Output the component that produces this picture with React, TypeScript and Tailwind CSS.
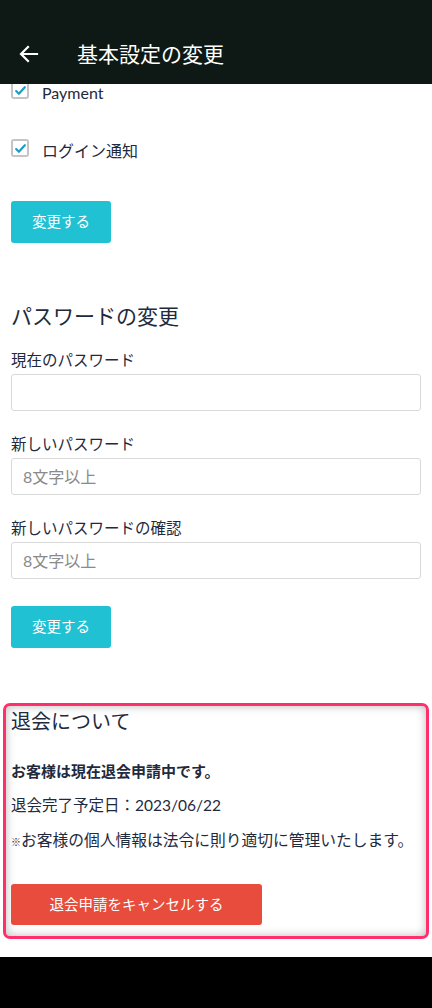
import React from "react";

const font = { fontFamily: 'Lato, "Noto Sans CJK JP", sans-serif' };

const CheckBox = () => (
  <span className="flex h-[18px] w-[18px] flex-shrink-0 items-center justify-center rounded-[3px] border-2 border-[#c4c4c4] bg-white">
    <svg viewBox="0 0 24 24" className="h-[13px] w-[13px]" fill="none">
      <path d="M4 13l5 5L20 6" stroke="#1d9cc0" strokeWidth={4} strokeLinecap="round" strokeLinejoin="round" />
    </svg>
  </span>
);

const Field = ({ label, placeholder }: { label: string; placeholder?: string }) => (
  <div className="mt-[22px] first:mt-[17px]">
    <label className="block text-[15.5px] leading-[22px] text-[#1f2a3d]">{label}</label>
    <input
      type="password"
      placeholder={placeholder}
      className="mt-[3px] block h-[37px] w-full rounded-[3px] border border-[#d9d9d9] bg-white px-[11px] text-[16px] text-[#1f2a3d] placeholder:text-[#8a8a8a] outline-none"
    />
  </div>
);

const BlueButton = ({ className = "" }: { className?: string }) => (
  <button className={`h-[42px] w-[100px] rounded-[3px] bg-[#21c1d4] text-[14.5px] text-white ${className}`}>
    変更する
  </button>
);

export default function App() {
  return (
    <div className="relative h-[1008px] w-[432px] overflow-hidden bg-white" style={font}>
      <header className="relative z-10 flex h-[84px] items-end bg-[#0e1915] pb-[18px]">
        <svg viewBox="0 0 24 24" className="ml-[17px] h-[24px] w-[24px]" fill="none" stroke="white" strokeWidth={2.2} strokeLinecap="square">
          <path d="M20 12H5M11 5l-7 7 7 7" />
        </svg>
        <h1 className="ml-[36px] text-[21px] leading-[24px] text-white">基本設定の変更</h1>
      </header>

      <main className="-mt-[3px] px-[11px] text-[#1f2a3d]">
        <div className="flex h-[18px] items-center gap-[13px]">
          <CheckBox />
          <span className="translate-y-[3px] text-[16px] leading-[18px]">Payment</span>
        </div>
        <div className="mt-[40px] flex h-[18px] items-center gap-[13px]">
          <CheckBox />
          <span className="translate-y-[3px] text-[16px] leading-[18px]">ログイン通知</span>
        </div>
        <BlueButton className="mt-[44px] block" />

        <h2 className="mt-[57px] text-[21px] leading-[32px]">パスワードの変更</h2>
        <div>
          <Field label="現在のパスワード" />
          <Field label="新しいパスワード" placeholder="8文字以上" />
          <Field label="新しいパスワードの確認" placeholder="8文字以上" />
        </div>
        <BlueButton className="mt-[27px] block h-[41px]" />
      </main>

      <section className="mx-[3px] mt-[55px] h-[236px] rounded-[7px] border-[3px] border-[#ff2f6b] bg-white px-[5px] text-[#1f2a3d] shadow-[inset_0_0_10px_rgba(0,0,0,0.28)]">
        <h2 className="text-[20px] leading-[30px]">退会について</h2>
        <p className="mt-[24px] text-[15px] font-bold leading-[22px]">お客様は現在退会申請中です。</p>
        <p className="mt-[12px] text-[15.5px] leading-[22px]">退会完了予定日：2023/06/22</p>
        <p className="mt-[12px] text-[15.75px] leading-[24px]">
          <span className="text-[10px]">※</span>お客様の個人情報は法令に則り適切に管理いたします。
        </p>
        <button className="mt-[30px] h-[41px] w-[251px] rounded-[3px] bg-[#e74c3c] text-[14.5px] text-white">
          退会申請をキャンセルする
        </button>
      </section>

      <div className="absolute bottom-0 left-0 h-[51px] w-full bg-black" />
    </div>
  );
}
